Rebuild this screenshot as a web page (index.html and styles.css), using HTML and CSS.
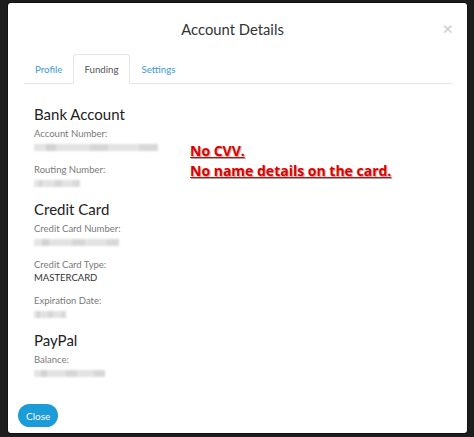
FILE: index.html
```html
<!DOCTYPE html>
<html lang="en">
<head>
  <meta charset="UTF-8">
  <title>Account Details</title>
  <link rel="stylesheet" href="styles.css">
</head>
<body>
  <div class="modal">
    <div class="modal-header">
      <h2 class="modal-title">Account Details</h2>
      <span class="close-x">&times;</span>
    </div>

    <div class="modal-body">
      <ul class="tabs">
        <li class="tab">Profile</li>
        <li class="tab active">Funding</li>
        <li class="tab">Settings</li>
      </ul>

      <div class="tab-content">
        <h3>Bank Account</h3>
        <div class="field">
          <div class="label">Account Number:</div>
          <div class="value"><span class="blur" style="width: 124px;"></span></div>
        </div>
        <div class="field">
          <div class="label">Routing Number:</div>
          <div class="value"><span class="blur" style="width: 46px;"></span></div>
        </div>

        <h3>Credit Card</h3>
        <div class="field">
          <div class="label">Credit Card Number:</div>
          <div class="value"><span class="blur" style="width: 85px;"></span></div>
        </div>
        <div class="field">
          <div class="label">Credit Card Type:</div>
          <div class="value">MASTERCARD</div>
        </div>
        <div class="field">
          <div class="label">Expiration Date:</div>
          <div class="value"><span class="blur" style="width: 32px;"></span></div>
        </div>

        <h3>PayPal</h3>
        <div class="field">
          <div class="label">Balance:</div>
          <div class="value"><span class="blur" style="width: 71px;"></span></div>
        </div>
      </div>
    </div>

    <div class="modal-footer">
      <button class="btn-close">Close</button>
    </div>

    <div class="note">
      No CVV.<br>
      No name details on the card.
    </div>
  </div>
</body>
</html>
```

FILE: styles.css
```css
*, *::before, *::after {
    box-sizing: border-box;
}
body {
    margin: 0;
    padding: 3px 7px 0 8px;
    background-color: #1d1d1d;
    font-family: Lato, 'Open Sans', sans-serif;
    color: #333;
    height: 437px;
    overflow: hidden;
}
.modal {
    position: relative;
    width: 459px;
    height: 430px;
    background: #fff;
    border-radius: 3px;
    box-shadow: 0 0 0 1px #111;
}
.modal-header {
    position: relative;
    padding: 16px 10px 15px 0;
    text-align: center;
}
.modal-title {
    margin: 0;
    font-size: 14.8px;
    line-height: 20px;
    font-weight: 400;
    color: #333;
}
.close-x {
    position: absolute;
    right: 14px;
    top: 15px;
    font-size: 18px;
    line-height: 20px;
    color: #c8c8c8;
}
.modal-body {
    padding: 0 15px 0 16px;
}
.tabs {
    display: flex;
    margin: 0;
    padding: 0;
    list-style: none;
    border-bottom: 1px solid #e6e6e6;
}
.tab {
    padding: 8px 10px 7px;
    font-size: 9.7px;
    line-height: 13px;
    color: #3d9bd6;
    border: 1px solid transparent;
    border-bottom: none;
    margin-bottom: -1px;
}
.tab:first-child {
    padding-left: 10px;
}
.tab.active {
    color: #555;
    background: #fff;
    border-color: #e6e6e6;
    border-bottom: 1px solid #fff;
    border-radius: 3px 3px 0 0;
    margin-right: 1px;
}
.tab-content {
    padding: 20px 10px 0;
}
h3 {
    margin: 0 0 3px;
    font-size: 15px;
    line-height: 20px;
    font-weight: 400;
    color: #222;
}
.field {
    margin-bottom: 10px;
}
.label {
    font-size: 9.5px;
    line-height: 13px;
    color: #7a7a7a;
}
.value {
    font-size: 9.5px;
    line-height: 13px;
    color: #333;
    height: 13px;
}
.blur {
    display: inline-block;
    vertical-align: middle;
    height: 7px;
    background: linear-gradient(to right, #e4e4e4 0 10%, #d2d2d2 10% 18%, #e2e2e2 18% 45%, #d6d6d6 45% 60%, #e3e3e3 60% 85%, #d8d8d8 85%);
    filter: blur(1px);
}
.modal-footer {
    position: absolute;
    left: 10px;
    bottom: 6px;
}
.btn-close {
    padding: 0 8px;
    height: 23px;
    border: none;
    border-radius: 12px;
    background: #1b9bd7;
    color: #fff;
    font-family: Lato, 'Open Sans', sans-serif;
    font-size: 10px;
    cursor: pointer;
}
.note {
    position: absolute;
    left: 182px;
    top: 138px;
    font-family: 'Open Sans', sans-serif;
    font-weight: 700;
    font-size: 14px;
    line-height: 20px;
    color: #e00000;
    text-decoration: underline;
    text-shadow: 1px 1px 1px rgba(0, 0, 0, 0.35);
}
```
